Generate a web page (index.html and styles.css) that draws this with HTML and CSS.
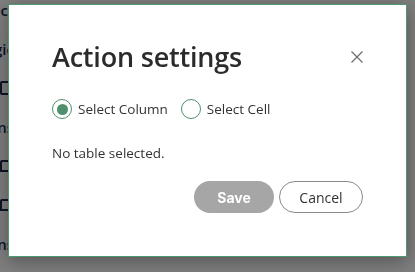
FILE: index.html
```html
<!DOCTYPE html>
<html lang="en">
<head>
    <meta charset="UTF-8">
    <meta name="viewport" content="width=device-width, initial-scale=1.0">
    <title>Action settings</title>
    <link rel="stylesheet" href="styles.css">
</head>
<body>
    <div class="page">
        <ul class="side-list">
            <li class="side-item">Select</li>
            <li class="side-item">Logic</li>
            <li class="side-item icon-item"><span class="doc-icon"></span></li>
            <li class="side-item">Actions</li>
            <li class="side-item icon-item"><span class="chat-icon"></span></li>
            <li class="side-item icon-item"><span class="chat-icon"></span></li>
            <li class="side-item">Options</li>
        </ul>
    </div>

    <div class="overlay"></div>

    <div class="dialog" role="dialog" aria-labelledby="dialogTitle">
        <div class="dialog-header">
            <h2 id="dialogTitle">Action settings</h2>
            <button class="close-btn" aria-label="Close">
                <svg width="12" height="12" viewBox="0 0 12 12">
                    <path d="M0.5 0.5 L11.5 11.5 M11.5 0.5 L0.5 11.5" stroke="#6b6b6b" stroke-width="1.2" fill="none"/>
                </svg>
            </button>
        </div>

        <div class="radio-row">
            <label class="radio">
                <input type="radio" name="target" checked>
                <span class="radio-mark"></span>
                Select Column
            </label>
            <label class="radio">
                <input type="radio" name="target">
                <span class="radio-mark"></span>
                Select Cell
            </label>
        </div>

        <p class="status">No table selected.</p>

        <div class="dialog-footer">
            <button class="btn btn-save" disabled>Save</button>
            <button class="btn btn-cancel">Cancel</button>
        </div>
    </div>
</body>
</html>
```

FILE: styles.css
```css
* {
    margin: 0;
    padding: 0;
    box-sizing: border-box;
}

body {
    width: 415px;
    height: 272px;
    overflow: hidden;
    background: #fff;
    font-family: 'Open Sans', 'Noto Sans', sans-serif;
    color: #333;
}

/* page behind the modal */
.page {
    height: 100%;
}

.side-list {
    list-style: none;
    width: 14px;
    overflow: hidden;
    margin-top: -10px;
}

.side-item {
    height: 39px;
    display: flex;
    justify-content: flex-end;
    align-items: center;
    font-size: 15px;
    font-weight: 600;
    color: #1d2b4f;
    white-space: nowrap;
}

.doc-icon {
    width: 12px;
    height: 14px;
    border: 2px solid #1d2b4f;
    border-radius: 2px;
    margin-right: 4px;
}

.chat-icon {
    width: 14px;
    height: 12px;
    border: 2px solid #1d2b4f;
    border-radius: 2px 2px 2px 0;
    margin-right: 4px;
}

.overlay {
    position: fixed;
    inset: 0;
    background: rgba(0, 0, 0, 0.5);
}

/* modal */
.dialog {
    position: absolute;
    left: 8px;
    top: 4px;
    width: 399px;
    height: 253px;
    background: #fff;
    border: 1px solid #4e9a6f;
    box-shadow: 0 4px 18px rgba(0, 0, 0, 0.35);
    padding: 34px 43px 0 43px;
    display: flex;
    flex-direction: column;
}

.dialog-header {
    display: flex;
    justify-content: space-between;
    align-items: center;
    height: 36px;
}

h2 {
    font-size: 27px;
    line-height: 36px;
    font-weight: 600;
    color: #2b2b2b;
    letter-spacing: -0.2px;
}

.close-btn {
    width: 14px;
    height: 14px;
    border: none;
    background: none;
    display: flex;
    align-items: center;
    justify-content: center;
    cursor: pointer;
    margin-right: -1px;
}

.radio-row {
    display: flex;
    gap: 13px;
    margin-top: 24px;
}

.radio {
    display: flex;
    align-items: center;
    gap: 6px;
    font-size: 13.5px;
    line-height: 20px;
    color: #333;
    cursor: pointer;
}

.radio input {
    display: none;
}

.radio-mark {
    width: 20px;
    height: 20px;
    border: 1.5px solid #4e8f6c;
    border-radius: 50%;
    display: flex;
    align-items: center;
    justify-content: center;
}

.radio input:checked + .radio-mark::after {
    content: '';
    width: 11px;
    height: 11px;
    border-radius: 50%;
    background: #4e8f6c;
}

.status {
    font-size: 13.5px;
    line-height: 20px;
    margin-top: 24px;
    color: #333;
}

.dialog-footer {
    display: flex;
    justify-content: flex-end;
    gap: 5px;
    margin-top: 18px;
}

.btn {
    height: 32px;
    border-radius: 16px;
    font-size: 14px;
    font-family: 'Open Sans', sans-serif;
}

.btn-save {
    width: 80px;
    background: #a6a6a6;
    border: none;
    color: #fff;
    font-family: 'Inter', sans-serif;
    font-weight: 700;
}

.btn-cancel {
    width: 84px;
    background: #fff;
    border: 1px solid #8a8a8a;
    color: #333;
    cursor: pointer;
}
```
